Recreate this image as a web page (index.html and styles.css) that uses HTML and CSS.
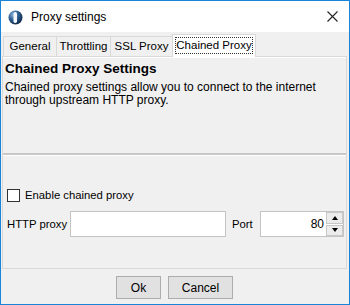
FILE: index.html
```html
<!DOCTYPE html>
<html lang="en">
<head>
    <meta charset="UTF-8">
    <title>Proxy settings</title>
    <link rel="stylesheet" href="styles.css">
</head>
<body>
    <div class="window">
        <div class="titlebar">
            <svg class="app-icon" width="15" height="15" viewBox="0 0 15 15">
                <defs>
                    <radialGradient id="globe" cx="0.35" cy="0.3" r="0.8">
                        <stop offset="0" stop-color="#8fb4d9"/>
                        <stop offset="0.45" stop-color="#2e5f93"/>
                        <stop offset="1" stop-color="#0b1f38"/>
                    </radialGradient>
                </defs>
                <circle cx="7.5" cy="7.5" r="7" fill="url(#globe)"/>
                <rect x="5.5" y="2" width="3.5" height="11" rx="1.7" fill="#f4f7fb"/>
            </svg>
            <span class="title">Proxy settings</span>
            <svg class="close" width="11" height="11" viewBox="0 0 11 11">
                <path d="M0.5 0.5 L10.5 10.5 M10.5 0.5 L0.5 10.5" stroke="#222" stroke-width="1.1"/>
            </svg>
        </div>

        <div class="content">
            <div class="tabs">
                <div class="tab general">General</div>
                <div class="tab throttling">Throttling</div>
                <div class="tab ssl">SSL Proxy</div>
                <div class="tab chained active"><span class="focus">Chained Proxy</span></div>
            </div>

            <div class="panel">
                <div class="intro">
                    <h3>Chained Proxy Settings</h3>
                    <p>Chained proxy settings allow you to connect to the internet<br>through upstream HTTP proxy.</p>
                </div>
                <div class="separator"></div>

                <div class="form">
                    <label class="check"><span class="box"></span>Enable chained proxy</label>
                    <div class="row">
                        <span class="label">HTTP proxy</span>
                        <div class="field host"></div>
                        <span class="label port-label">Port</span>
                        <div class="field port">
                            <span class="value">80</span>
                            <div class="spin">
                                <div class="spin-btn"><span class="arrow up"></span></div>
                                <div class="spin-btn"><span class="arrow down"></span></div>
                            </div>
                        </div>
                    </div>
                </div>
            </div>

            <div class="buttons">
                <button class="ok">Ok</button>
                <button class="cancel">Cancel</button>
            </div>
        </div>
    </div>
</body>
</html>
```

FILE: styles.css
```css
body {
    margin: 0;
    width: 350px;
    height: 305px;
    font-family: "Liberation Sans", Arial, sans-serif;
    font-size: 12px;
    color: #000;
    background: #f0f0f0;
}
.window {
    width: 350px;
    height: 305px;
    box-sizing: border-box;
    border: 1px solid #1a84d8;
    display: flex;
    flex-direction: column;
}
.titlebar {
    height: 31px;
    background: #fff;
    display: flex;
    align-items: center;
    padding: 0 0 0 7px;
}
.app-icon {
    margin-right: 8px;
    margin-top: 1px;
}
.title {
    font-size: 12px;
    flex: 1;
}
.close {
    margin-right: 11px;
}
.content {
    flex: 1;
    background: #f0f0f0;
    padding: 0 2px 0 1px;
    display: flex;
    flex-direction: column;
}
.tabs {
    height: 24px;
    display: flex;
    align-items: flex-end;
    padding-left: 1px;
    font-size: 11.5px;
}
.tab {
    height: 20px;
    line-height: 19px;
    text-align: center;
    border: 1px solid #d9d9d9;
    border-bottom: none;
    margin-right: -1px;
    background: #f0f0f0;
    box-sizing: border-box;
    white-space: nowrap;
}
.general {
    width: 54px;
}
.throttling {
    width: 55px;
}
.ssl {
    width: 63px;
}
.chained {
    width: 84px;
}
.tab.active {
    height: 23px;
    padding: 2px 2px 0;
    background: #fff;
    margin-bottom: -1px;
    position: relative;
    z-index: 1;
}
.focus {
    display: block;
    line-height: 15px;
    border: 1px dotted #333;
}
.panel {
    height: 213px;
    border: 1px solid #d9d9d9;
    box-shadow: inset 0 1px 0 #fff;
    box-sizing: border-box;
    display: flex;
    flex-direction: column;
}
.intro {
    height: 96px;
    padding: 3px 2px 0;
    box-sizing: border-box;
}
.intro h3 {
    margin: 0;
    font-size: 13.5px;
    line-height: 17px;
    font-weight: bold;
}
.intro p {
    margin: 4px 0 0;
    line-height: 13px;
}
.separator {
    border-top: 2px solid #c8c8c8;
    border-bottom: 1px solid #fff;
}
.form {
    padding: 32px 4px 0;
    font-size: 11.3px;
}
.check {
    display: flex;
    align-items: center;
    height: 14px;
}
.box {
    width: 11px;
    height: 11px;
    border: 1px solid #333;
    background: #fff;
    margin-right: 5px;
}
.row {
    display: flex;
    align-items: center;
    margin-top: 9px;
}
.label {
    width: 63px;
    white-space: nowrap;
    flex: none;
}
.port-label {
    width: 28px;
    margin-left: 6px;
}
.field {
    height: 26px;
    box-sizing: border-box;
    background: #fff;
    border: 1px solid #c4c4c4;
    flex: none;
}
.host {
    width: 156px;
}
.port {
    width: 84px;
    display: flex;
    align-items: center;
    justify-content: flex-end;
    font-size: 12px;
}
.value {
    margin-right: 2px;
}
.spin {
    width: 17px;
    height: 24px;
    display: flex;
    flex-direction: column;
    gap: 1px;
}
.spin-btn {
    flex: 1;
    background: #ececec;
    border: 1px solid #c8c8c8;
    display: flex;
    align-items: center;
    justify-content: center;
}
.arrow {
    width: 0;
    height: 0;
    border-left: 3px solid transparent;
    border-right: 3px solid transparent;
}
.arrow.up {
    border-bottom: 4px solid #000;
}
.arrow.down {
    border-top: 4px solid #000;
}
.buttons {
    display: flex;
    justify-content: center;
    gap: 7px;
    padding-top: 7px;
}
button {
    height: 23px;
    padding: 0;
    background: #e1e1e1;
    border: 1px solid #adadad;
    font-family: inherit;
    font-size: 12px;
    color: #000;
}
.ok {
    width: 45px;
}
.cancel {
    width: 65px;
}
```
